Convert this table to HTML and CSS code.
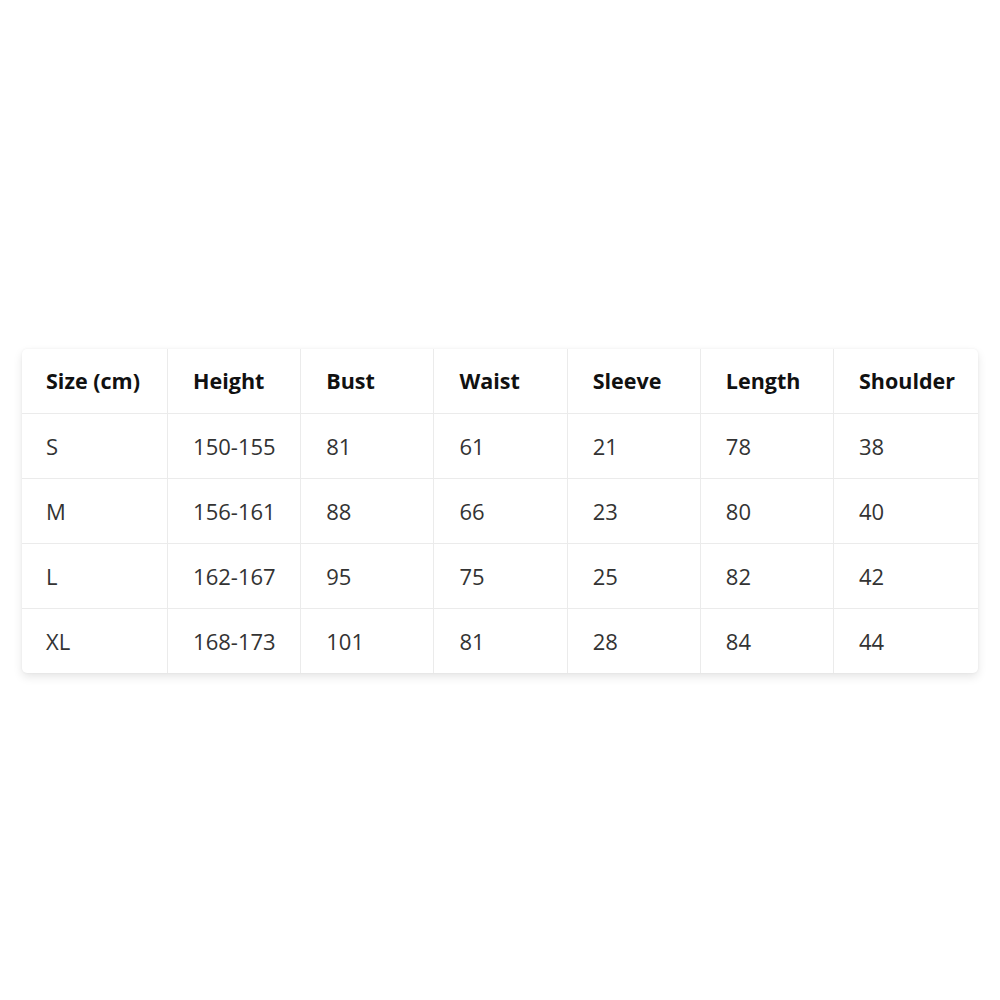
FILE: index.html
```html
<!DOCTYPE html>
<html>
<head>
<meta charset="utf-8">
<link rel="stylesheet" href="styles.css">
</head>
<body>
<div class="page">
  <div class="card">
    <table class="sizes">
      <colgroup>
        <col class="c-first"><col class="c-mid"><col class="c-mid"><col class="c-mid"><col class="c-mid"><col class="c-mid"><col class="c-last">
      </colgroup>
      <thead>
        <tr><th>Size (cm)</th><th>Height</th><th>Bust</th><th>Waist</th><th>Sleeve</th><th>Length</th><th>Shoulder</th></tr>
      </thead>
      <tbody>
        <tr><td>S</td><td>150-155</td><td>81</td><td>61</td><td>21</td><td>78</td><td>38</td></tr>
        <tr><td>M</td><td>156-161</td><td>88</td><td>66</td><td>23</td><td>80</td><td>40</td></tr>
        <tr><td>L</td><td>162-167</td><td>95</td><td>75</td><td>25</td><td>82</td><td>42</td></tr>
        <tr><td>XL</td><td>168-173</td><td>101</td><td>81</td><td>28</td><td>84</td><td>44</td></tr>
      </tbody>
    </table>
  </div>
</div>
</body>
</html>
```
FILE: styles.css
```css
html, body {
  margin: 0;
  padding: 0;
  background: #ffffff;
}
.page {
  width: 1000px;
  height: 1000px;
  box-sizing: border-box;
  padding-top: 21px;
  display: flex;
  align-items: center;
  justify-content: center;
}
.card {
  width: 956px;
  background: #fff;
  border-radius: 5px;
  overflow: hidden;
  box-shadow: 0 4px 10px rgba(0, 0, 0, 0.1), 0 0 3px rgba(0, 0, 0, 0.05);
}
.sizes {
  width: 100%;
  border-collapse: collapse;
  table-layout: fixed;
  font-family: "Open Sans", "Noto Sans", sans-serif;
  font-size: 22px;
}
.c-first { width: 145.6px; }
.c-mid { width: 133.2px; }
.c-last { width: 144.4px; }
.sizes th, .sizes td {
  height: 64px;
  padding: 0 0 0 25px;
  text-align: left;
  vertical-align: middle;
  border-right: 1px solid #ebebeb;
  border-bottom: 1px solid #ebebeb;
  white-space: nowrap;
}
.sizes th:first-child, .sizes td:first-child { padding-left: 24px; }
.sizes th:last-child, .sizes td:last-child { border-right: none; }
.sizes tbody tr:last-child td { border-bottom: none; }
.sizes th {
  font-weight: 700;
  font-size: 21.5px;
  color: #111;
}
.sizes td {
  font-weight: 400;
  color: #333;
}
```
